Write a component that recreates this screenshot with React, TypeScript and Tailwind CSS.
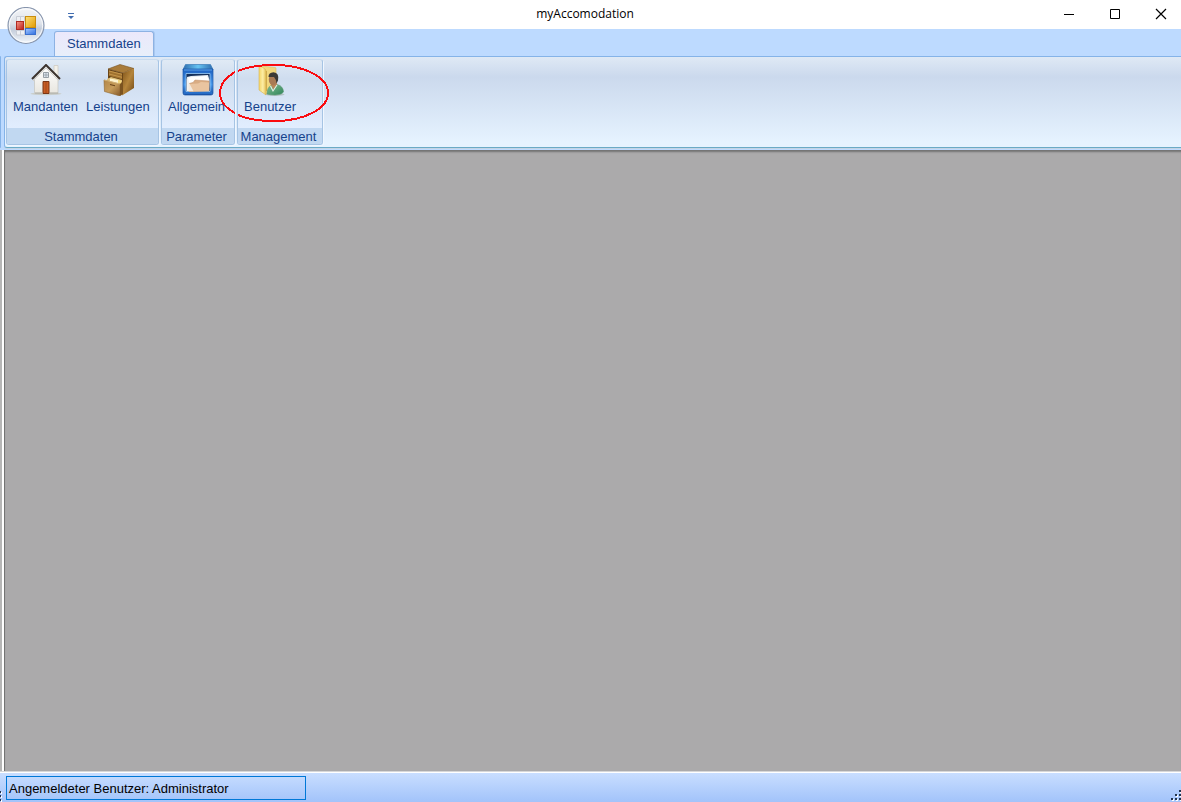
import type { ReactNode } from "react";

function OrbIcon() {
  return (
    <svg viewBox="0 0 38 38" className="size-[38px]" aria-hidden="true">
      <defs>
        <linearGradient id="orb" x1="0" y1="0" x2="0" y2="1">
          <stop offset="0" stopColor="#f4f5f8" />
          <stop offset="0.45" stopColor="#dde2ea" />
          <stop offset="0.6" stopColor="#c3ccda" />
          <stop offset="1" stopColor="#f2f7fc" />
        </linearGradient>
        <linearGradient id="orbYellow" x1="0" y1="0" x2="1" y2="1">
          <stop offset="0" stopColor="#ffe07a" />
          <stop offset="1" stopColor="#e09a00" />
        </linearGradient>
        <linearGradient id="orbRed" x1="0" y1="0" x2="1" y2="1">
          <stop offset="0" stopColor="#f59a8c" />
          <stop offset="1" stopColor="#bd1c14" />
        </linearGradient>
        <linearGradient id="orbBlue" x1="0" y1="0" x2="1" y2="1">
          <stop offset="0" stopColor="#a5c8ff" />
          <stop offset="1" stopColor="#2f6fe0" />
        </linearGradient>
      </defs>
      <circle cx="19" cy="18.5" r="18" fill="url(#orb)" stroke="#8694ac" strokeWidth="1.1" />
      <circle cx="19" cy="18.5" r="16.6" fill="none" stroke="#ffffff" strokeOpacity="0.8" />
      <path d="M9.5 9.500h8v5h-8zM9.500 23.500h8v4.500h-8z" fill="#eef0f4" stroke="#c9cdd6" />
      <path d="M13.5 9.500v5M13.500 23.500v4.500" stroke="#c9cdd6" />
      <rect x="9.500" y="14.500" width="7" height="8" fill="url(#orbRed)" stroke="#b02a22" />
      <rect x="18.500" y="9.500" width="10" height="11" fill="url(#orbYellow)" stroke="#c98d10" />
      <rect x="18.500" y="21.500" width="10" height="6" fill="url(#orbBlue)" stroke="#3b70ce" />
    </svg>
  );
}

function HouseIcon() {
  return (
    <svg viewBox="0 0 32 32" className="size-8" aria-hidden="true">
      <defs>
        <linearGradient id="wall" x1="0" y1="0" x2="0" y2="1">
          <stop offset="0" stopColor="#ffffff" />
          <stop offset="1" stopColor="#e8e6df" />
        </linearGradient>
      </defs>
      <ellipse cx="16" cy="29.8" rx="15.5" ry="1.5" fill="#c9cdca" />
      <path d="M24 1.500h4v12h-4z" fill="#f3f1e9" stroke="#cfccc3" strokeWidth="0.800" />
      <path d="M4.500 14 16 2.500 28 14v15.500H4.500z" fill="url(#wall)" stroke="#c4c4bf" strokeWidth="0.700" />
      <path d="m3 17 13-13 13 13" fill="none" stroke="#d4d2cb" strokeWidth="1" />
      <path d="m2 15 14-14 14 14" fill="none" stroke="#3d342e" strokeWidth="2" />
      <path d="M13.500 8.500h5v5h-5z" fill="#dee6ee" stroke="#8d959d" strokeWidth="0.900" />
      <path d="M16 8.500v5M13.500 11h5" stroke="#8d959d" strokeWidth="0.700" />
      <path d="M13 17.500h6v12h-6z" fill="#c75c22" stroke="#7a3515" />
      <path d="M16 18v11" stroke="#9b421a" strokeWidth="0.800" />
      <path d="M5 29h7.500M20 29h8" stroke="#a9aaa1" strokeWidth="1.200" />
    </svg>
  );
}

function CabinetIcon() {
  return (
    <svg viewBox="0 0 32 32" className="size-8" aria-hidden="true">
      <defs>
        <linearGradient id="cabSide" x1="0" y1="0" x2="1" y2="1">
          <stop offset="0" stopColor="#7c5017" />
          <stop offset="0.500" stopColor="#b5853b" />
          <stop offset="1" stopColor="#6e4513" />
        </linearGradient>
        <linearGradient id="cabFront" x1="0" y1="0" x2="1" y2="1">
          <stop offset="0" stopColor="#b48748" />
          <stop offset="0.500" stopColor="#c69c5a" />
          <stop offset="1" stopColor="#85592a" />
        </linearGradient>
      </defs>
      <path d="M6 5 18 0.500 32 4.500 21 9z" fill="#a97c3a" stroke="#785321" strokeWidth="0.600" />
      <path d="M21 9 32 4.500V24L20 31.500z" fill="url(#cabSide)" />
      <path d="M6 5 21 9v20L6 25z" fill="#6a4517" />
      <path d="m7 6.500 13 3.300v5.400L7 12z" fill="#a0722f" />
      <path d="m7 7 13 3.300M7 10l13 3.300" stroke="#c99b50" strokeWidth="0.900" />
      <path d="m7 12.500 13 3.200V22L7 19z" fill="#46300f" />
      <path d="m5 15 4-2 11 3v6L5 18z" fill="#dfc07b" />
      <path d="m8 14.500 8 1.500v4l-8-2z" fill="#fff5cf" />
      <path d="m16 16 3 .6v3.500l-3-.8z" fill="#f3d77c" />
      <path d="M2 16 18 20v12L2.500 27.500z" fill="url(#cabFront)" stroke="#8b632c" strokeWidth="0.600" />
      <path d="m18 20 3-3v13l-3 2z" fill="#7b5320" />
      <path d="m2 16 16 4" stroke="#e0bd7b" strokeWidth="0.800" />
      <path d="m8 20.500 5 1.300" stroke="#69451b" strokeWidth="1.100" />
    </svg>
  );
}

function DrawerIcon() {
  return (
    <svg viewBox="-1 0 32 32" className="size-8 overflow-visible" aria-hidden="true">
      <defs>
        <linearGradient id="boxTop" x1="0" y1="0" x2="1" y2="0">
          <stop offset="0" stopColor="#2d6cae" />
          <stop offset="0.500" stopColor="#67c4f2" />
          <stop offset="1" stopColor="#2d6cae" />
        </linearGradient>
        <linearGradient id="boxFront" x1="0" y1="0" x2="0" y2="1">
          <stop offset="0" stopColor="#1b5fc0" />
          <stop offset="0.600" stopColor="#4b9cec" />
          <stop offset="1" stopColor="#174fa6" />
        </linearGradient>
      </defs>
      <path d="M3.500 0.500h25l2.500 5H1z" fill="url(#boxTop)" stroke="#3c7cb8" strokeWidth="0.700" />
      <path d="M1 5h30v24q0 2-2 2H3q-2 0-2-2z" fill="url(#boxFront)" stroke="#1c58a8" strokeWidth="0.700" />
      <path d="M2 6h28" stroke="#6fb5f3" strokeWidth="0.800" />
      <path d="M4 9.500h24v18H4z" fill="#14305c" stroke="#9ccdf7" strokeWidth="0.800" />
      <path d="m5 13 4-1 17-1 1.500 5-.5 11H5z" fill="#e6ecf2" />
      <path d="m6 13.500 19-1.500 2 5-20 2z" fill="#ffffff" />
      <path d="m7 19.500 4-1 2-2.500 14 1v10l-20 .5z" fill="#d9ac83" stroke="#c08f68" strokeWidth="0.500" />
      <path d="m7 20 9-.5 3-1.500 8 .5v8.500l-20 .5z" fill="#e9c4a0" />
      <path d="M4.500 14v13l7 .3z" fill="#f4f2ef" fillOpacity="0.800" />
      <path d="M2 29h28" stroke="#2f7fdc" />
    </svg>
  );
}

function UserFolderIcon() {
  return (
    <svg viewBox="0 0 32 32" className="size-8" aria-hidden="true">
      <defs>
        <linearGradient id="folder" x1="0" y1="0" x2="1" y2="0">
          <stop offset="0" stopColor="#f3d467" />
          <stop offset="0.550" stopColor="#fdeea5" />
          <stop offset="1" stopColor="#e3be55" />
        </linearGradient>
        <linearGradient id="shirt" x1="0" y1="0" x2="1" y2="1">
          <stop offset="0" stopColor="#82bd95" />
          <stop offset="1" stopColor="#2f8559" />
        </linearGradient>
      </defs>
      <path d="m7 2 14 1.500q1 0 1 1V27l-11 3z" fill="#f2d77c" stroke="#dcbc62" strokeWidth="0.600" />
      <path d="m5 1 6 4q1 1 1 2v24l-7-5z" fill="url(#folder)" stroke="#d8b552" strokeWidth="0.600" />
      <path d="M12.500 7v20" stroke="#c7a142" strokeWidth="0.800" />
      <ellipse cx="21" cy="30.500" rx="9.500" ry="1.400" fill="#98a39a" fillOpacity="0.500" />
      <path d="M13 30q0-7 5-9l5-.5q6 1.500 6.500 7-.5 3-8.500 3.500-5 0-8-1z" fill="url(#shirt)" stroke="#5a9773" strokeWidth="0.600" />
      <path d="m16.500 20 3 5.500 3.500-5-.5-3h-5z" fill="#b98559" />
      <ellipse cx="19" cy="15.500" rx="4.200" ry="5.700" fill="#a87a55" />
      <path d="M14.500 13q0-4.500 5-4.800 6 .5 4.500 8.300l-1.500 3q-.5-4.500-2.500-6.500z" fill="#3b3936" />
      <path d="m16.500 22 2.500 5 4-6" fill="none" stroke="#e7f0e6" strokeWidth="1.100" />
    </svg>
  );
}

function RibbonButton({ label, children }: { label: string; children: ReactNode }) {
  return (
    <button type="button" className="flex flex-col items-center gap-[3px] text-[13px] leading-[15px] text-[#15428b]">
      {children}
      <span>{label}</span>
    </button>
  );
}

function RibbonGroup({ title, width, children }: { title: string; width: string; children: ReactNode }) {
  return (
    <section
      aria-label={title}
      className={`relative flex flex-col rounded-[3px] border border-[#a6c4e4] border-t-[#c9dbee] bg-linear-to-b from-[#e0eaf5] from-0% via-[#cfddef] via-22% to-[#e1edfe] to-80% shadow-[1px_1px_0_#f0f7ff] ${width}`}
    >
      <div className="flex flex-1 gap-2 px-1.5 pt-1">{children}</div>
      <h2 className="h-4 rounded-b-[2px] bg-[#c1d8f1] pr-[3px] text-center text-[13px] leading-[18px] font-normal whitespace-nowrap text-[#15428b]">
        {title}
      </h2>
    </section>
  );
}

function HighlightRing() {
  return (
    <svg
      viewBox="0 0 112 60"
      className="pointer-events-none absolute top-[3px] -left-5 h-[60px] w-28"
      fill="none"
      stroke="#fa0c10"
      strokeWidth="2"
      shapeRendering="crispEdges"
      aria-hidden="true"
    >
      <path d="M17 9Q2 18 2 30Q2 42 17 50" />
      <path d="M20 8C29 4 42 2 56 2C86 2 110 14 110 30C110 46 86 58 56 58C41 58 29 56 20 52" />
    </svg>
  );
}

export default function App() {
  return (
    <div className="relative flex h-screen flex-col overflow-hidden bg-[#bddaff] font-['Liberation_Sans',Arial,sans-serif]">
      <header className="grid h-[29px] shrink-0 grid-cols-[1fr_auto_1fr] items-center bg-white pb-px">
        <button type="button" aria-label="Schnellzugriff anpassen" className="ml-[67px] w-2">
          <svg viewBox="0 0 8 8" className="mt-1 size-2" aria-hidden="true">
            <path d="M1 1.500h6" stroke="#416db0" />
            <path d="M1 4h6L4 7z" fill="#416db0" />
          </svg>
        </button>
        <h1 className="mr-[11px] font-['Open_Sans','Noto_Sans',sans-serif] text-[12px] leading-4 font-normal text-black">
          myAccomodation
        </h1>
        <div className="flex justify-end gap-1.5 text-black">
          <button type="button" aria-label="Minimieren" className="flex h-7 w-10 items-center justify-center">
            <svg viewBox="0 0 12 12" className="size-3" aria-hidden="true">
              <path d="M1 6.500h10" stroke="currentColor" />
            </svg>
          </button>
          <button type="button" aria-label="Maximieren" className="flex h-7 w-10 items-center justify-center">
            <svg viewBox="0 0 12 12" className="size-3" fill="none" aria-hidden="true">
              <path d="M1.500 1.500h9v9h-9z" stroke="currentColor" />
            </svg>
          </button>
          <button type="button" aria-label="Schließen" className="flex h-7 w-10 items-center justify-center">
            <svg viewBox="0 0 12 12" className="size-3" aria-hidden="true">
              <path d="m1 1 10 10M11 1 1 11" stroke="currentColor" strokeWidth="1.200" />
            </svg>
          </button>
        </div>
      </header>

      <button type="button" aria-label="Anwendungsmenü" className="absolute top-[7px] left-[7px] rounded-full">
        <OrbIcon />
      </button>

      <nav className="flex h-[27px] shrink-0 items-end pl-[54px]">
        <button
          type="button"
          className="h-[25px] rounded-t-[3px] border border-b-0 border-[#8db2e3] bg-linear-to-b from-[#ebe8fb] to-[#e8effa] px-3 text-[13px] leading-[24px] text-[#15428b] shadow-[1px_0_0_#a9c8f0]"
        >
          Stammdaten
        </button>
      </nav>

      <div className="flex h-[92px] shrink-0">
        <div className="mr-[3px] w-px rounded-r-[2px] border-r border-[#85b3e8]" />
        <div className="flex flex-1 gap-0.5 rounded-l-[3px] border border-r-0 border-[#85b3e8] border-b-[#6aaac6] bg-linear-to-b from-[#dfe9f5] from-0% via-[#cbd9ed] via-22% to-[#e6f3ff] to-95% pt-0.5 pb-0.5 pl-px shadow-[0_1px_0_#c4d5e5]">
          <RibbonGroup title="Stammdaten" width="w-[153px]">
            <RibbonButton label="Mandanten">
              <HouseIcon />
            </RibbonButton>
            <RibbonButton label="Leistungen">
              <CabinetIcon />
            </RibbonButton>
          </RibbonGroup>
          <RibbonGroup title="Parameter" width="w-[74px]">
            <RibbonButton label="Allgemein">
              <DrawerIcon />
            </RibbonButton>
          </RibbonGroup>
          <RibbonGroup title="Management" width="w-[86px]">
            <RibbonButton label="Benutzer">
              <UserFolderIcon />
            </RibbonButton>
            <HighlightRing />
          </RibbonGroup>
        </div>
      </div>

      <main className="mt-0.5 flex flex-1 border-b border-[#d8d8d8] bg-[#abaaab]">
        <div className="w-[5px] border-r border-l-2 border-r-[#747474] border-l-[#b6b6b6] bg-white" />
        <div className="flex-1 shadow-[inset_0_3px_2px_-1px_#727272]" />
      </main>

      <footer className="flex h-[30px] shrink-0 items-end justify-between border-t border-white bg-linear-to-b from-[#c9deff] to-[#a2c3fa] pb-0.5">
        <div className="flex items-end">
          <svg viewBox="0 0 6 14" className="-mb-0.5 h-3.5 w-1.5" shapeRendering="crispEdges" aria-hidden="true">
            <path d="M0 3h1v2H0zM0 7h1v2H0zM0 11h1v2H0z" fill="#24364f" />
            <path d="M1 4h1v2H1zM1 8h1v2H1zM1 12h1v2H1z" fill="#ffffff" />
          </svg>
          <p className="h-6 w-[300px] border border-[#0078d7] pl-0.5 text-[13px] leading-[23px] text-black">
            Angemeldeter Benutzer: Administrator
          </p>
        </div>
        <svg viewBox="0 0 10 12" className="-mb-0.5 h-3 w-2.5" shapeRendering="crispEdges" aria-hidden="true">
          <path d="M9 1h2v2H9zM5 5h2v2H5zM9 5h2v2H9zM1 9h2v2H1zM5 9h2v2H5zM9 9h2v2H9z" fill="#ffffff" />
          <path d="M8 0h2v2H8zM4 4h2v2H4zM8 4h2v2H8zM0 8h2v2H0zM4 8h2v2H4zM8 8h2v2H8z" fill="#24364f" />
        </svg>
      </footer>
    </div>
  );
}
